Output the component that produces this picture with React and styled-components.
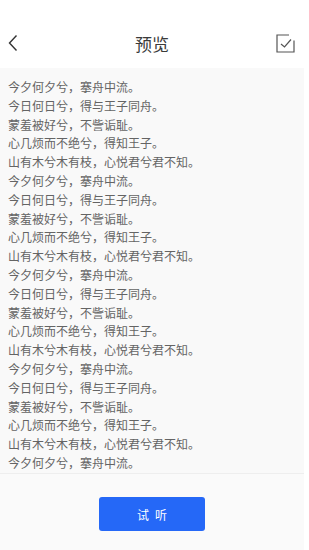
import React from "react";
import styled, { createGlobalStyle } from "styled-components";

const GlobalStyle = createGlobalStyle`
  html, body {
    margin: 0;
    padding: 0;
    background: #ffffff;
  }
  body {
    font-family: "Noto Sans CJK SC", "Noto Sans", sans-serif;
  }
`;

const Page = styled.div`
  width: 304px;
  height: 550px;
  display: flex;
  flex-direction: column;
  background: #fafafa;
`;

const Header = styled.header`
  height: 68px;
  flex: none;
  background: #ffffff;
  display: grid;
  grid-template-columns: 40px 1fr 40px;
  align-items: center;
  padding-top: 18px;
  box-sizing: border-box;
`;

const Title = styled.h1`
  margin: 0;
  text-align: center;
  font-size: 17px;
  font-weight: 400;
  color: #3a3a3a;
`;

const IconButton = styled.button`
  border: 0;
  background: none;
  padding: 0;
  height: 24px;
  display: flex;
  align-items: center;
  justify-content: ${({ $end }) => ($end ? "flex-end" : "flex-start")};
  padding-left: ${({ $end }) => ($end ? "0" : "7px")};
  padding-right: ${({ $end }) => ($end ? "9px" : "0")};
  cursor: pointer;
`;

const Content = styled.div`
  height: 406px;
  flex: none;
  overflow: hidden;
  padding: 10px 8px 0;
  box-sizing: border-box;
  background: #f9f9f9;
  border-bottom: 1px solid #eeeeee;
`;

const Line = styled.p`
  margin: 0;
  font-size: 12px;
  line-height: 18.8px;
  color: #646464;
  white-space: nowrap;
`;

const Footer = styled.div`
  flex: 1;
  display: flex;
  justify-content: center;
  align-items: flex-start;
  padding-top: 23px;
`;

const ListenButton = styled.button`
  width: 106px;
  height: 34px;
  border: 0;
  border-radius: 3px;
  background: #2568f7;
  color: #ffffff;
  font-family: inherit;
  font-size: 12px;
  cursor: pointer;
`;

const poem = [
  "今夕何夕兮，搴舟中流。",
  "今日何日兮，得与王子同舟。",
  "蒙羞被好兮，不訾诟耻。",
  "心几烦而不绝兮，得知王子。",
  "山有木兮木有枝，心悦君兮君不知。",
];

const lines = Array.from({ length: 21 }, (_, i) => poem[i % poem.length]);

const BackIcon = () => (
  <svg width="12" height="18" viewBox="0 0 12 18" fill="none">
    <path d="M9.5 1.5 L2.5 9 L9.5 16.5" stroke="#333" strokeWidth="1.4" />
  </svg>
);

const CheckIcon = () => (
  <svg width="19" height="19" viewBox="0 0 19 19" fill="none">
    <path d="M13 1 H1 V18 H18 V6.5" stroke="#555" strokeWidth="1.2" />
    <path d="M5 10 L8.5 13 L15 5.5" stroke="#555" strokeWidth="1.2" />
  </svg>
);

const App = () => (
  <>
    <GlobalStyle />
    <Page>
      <Header>
        <IconButton aria-label="返回">
          <BackIcon />
        </IconButton>
        <Title>预览</Title>
        <IconButton $end aria-label="确认">
          <CheckIcon />
        </IconButton>
      </Header>
      <Content>
        {lines.map((text, i) => (
          <Line key={i}>{text}</Line>
        ))}
      </Content>
      <Footer>
        <ListenButton>试{"\u2002"}听</ListenButton>
      </Footer>
    </Page>
  </>
);

export default App;
